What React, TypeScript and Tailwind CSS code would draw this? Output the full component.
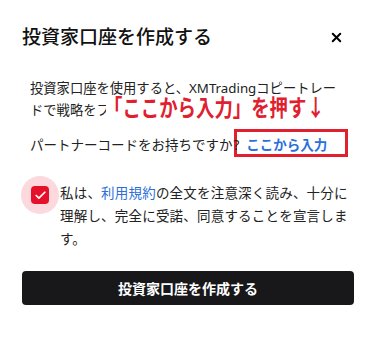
import { Check, X } from "lucide-react";

const font = {
  fontFamily: '"Noto Sans", "Noto Sans CJK JP", sans-serif',
};

export default function App() {
  return (
    <div className="w-[376px] h-[344px] bg-white text-[#1f1f1f]" style={font}>
      <div className="flex items-center justify-between pl-[22px] pr-[32px] pt-[24px]">
        <h2 className="text-[19px] leading-[26px] font-medium text-[#111]">
          投資家口座を作成する
        </h2>
        <X size={15} strokeWidth={3.2} className="text-black" />
      </div>

      <div className="relative mt-[27px] px-[30px] text-[13.3px] leading-[22px] text-[#222]">
        <p>
          投資家口座を使用すると、XMTradingコピートレードで戦略をフォローして取引できます。
        </p>
        {/* annotation over the screenshot */}
        <div className="absolute left-[106px] top-[19px] w-[250px] h-[25px] bg-white flex items-center">
          <span className="relative -top-[1px] -ml-[2px] block whitespace-nowrap origin-left scale-x-[0.8] text-[23px] leading-[25px] font-bold text-[#e0202e]">
            「ここから入力」を押す↓
          </span>
        </div>
      </div>

      <div className="relative mt-[13px] px-[30px] text-[13.5px] leading-[22px] text-[#222]">
        <div className="absolute left-[234px] top-[-5px] w-[114px] h-[28px] border-[3px] border-[#e0202e]" />
        <span className="relative">パートナーコードをお持ちですか</span>
        <span className="relative ml-[1px] mr-[7px]">?</span>
        <span className="relative font-bold text-[#2a6fdb]">ここから入力</span>
      </div>

      <div className="mt-[26px] flex items-start pl-[21px] pr-[28px]">
        <div className="-mt-[6px] w-[38px] h-[38px] shrink-0 rounded-full bg-[#fbd9dc] flex items-center justify-center">
          <div className="w-[18px] h-[18px] rounded-[4px] bg-[#e5102a] flex items-center justify-center">
            <Check size={13} strokeWidth={3.2} className="text-white" />
          </div>
        </div>
        <p className="ml-[1px] text-[13.5px] leading-[23px] text-[#222] tracking-[0.2px]">
          私は、<span className="text-[#2a6fdb]">利用規約</span>
          の全文を注意深く読み、十分に理解し、完全に受諾、同意することを宣言します。
        </p>
      </div>

      <div className="px-[22px] mt-[20px]">
        <button className="w-full h-[34px] rounded-[4px] bg-[#18181b] text-white text-[14px] font-bold">
          投資家口座を作成する
        </button>
      </div>
    </div>
  );
}
